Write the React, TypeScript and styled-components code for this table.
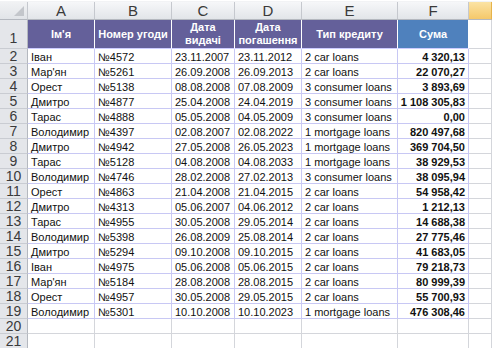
import styled, { createGlobalStyle } from "styled-components";

const GlobalStyle = createGlobalStyle`
    html, body { margin: 0; padding: 0; background: #ffffff; }
    body { width: 492px; height: 348px; overflow: hidden; }
`

const COLS = "28px 67px 77px 63px 67px 96px 71px 23px"

const Sheet = styled.div`
    display: flex;
    flex-direction: column;
    width: 492px;
    height: 348px;
    overflow: hidden;
    background: #ffffff;
    font-family: "Liberation Sans", Arial, sans-serif;
`
const TopStrip = styled.div`
    height: 4px;
    border-top: 1px solid #ffffff;
    background: #c9ccd2;
    border-bottom: 1px solid #f2f3f5;
    box-sizing: border-box;
`
const Row = styled.div<{ $h: number }>`
    display: grid;
    grid-template-columns: ${COLS};
    height: ${p => p.$h}px;
    flex-shrink: 0;
`
const ColHead = styled.div<{ $active?: boolean }>`
    display: flex;
    align-items: center;
    justify-content: center;
    box-sizing: border-box;
    border-right: 1px solid ${p => p.$active ? "#e6b34a" : "#c5c8ce"};
    border-bottom: 1px solid #b4b8bf;
    background: ${p => p.$active
        ? "linear-gradient(#fbe3a4, #f5c86a)"
        : "linear-gradient(#f6f7f9, #e2e5e9)"};
    color: #3a3a3a;
    font-size: 15px;
    line-height: 15px;
`
const Corner = styled(ColHead)`
    position: relative;
    background: linear-gradient(#f1f2f4, #e1e4e8);
    &::after {
        content: "";
        position: absolute;
        right: 3px;
        bottom: 3px;
        width: 0;
        height: 0;
        border-left: 10px solid transparent;
        border-bottom: 10px solid #c3c6cb;
    }
`
const RowHead = styled.div<{ $bottom?: boolean }>`
    display: flex;
    align-items: ${p => p.$bottom ? "flex-end" : "center"};
    justify-content: center;
    box-sizing: border-box;
    background: #e4e6ea;
    border-right: 1px solid #b4b8bf;
    border-bottom: 1px solid #c9ccd2;
    color: #3a3a3a;
    font-size: 14px;
    line-height: 13px;
    padding-bottom: ${p => p.$bottom ? "3px" : "0"};
`
const HeadCell = styled.div<{ $blue?: boolean }>`
    display: flex;
    align-items: center;
    justify-content: center;
    text-align: center;
    box-sizing: border-box;
    background: ${p => p.$blue ? "#4f81bd" : "#64609a"};
    border-right: 1px solid #ffffff;
    border-bottom: 1px solid #ccccff;
    color: #ffffff;
    font-weight: bold;
    font-size: 11px;
    line-height: 13px;
`
const Cell = styled.div<{ $num?: boolean; $grid?: boolean }>`
    display: flex;
    align-items: center;
    justify-content: ${p => p.$num ? "flex-end" : "flex-start"};
    box-sizing: border-box;
    padding: 1px 3px 0 3px;
    border-right: 1px solid ${p => p.$grid ? "#d4d6db" : "#c8c8f4"};
    border-bottom: 1px solid ${p => p.$grid ? "#d4d6db" : "#c8c8f4"};
    font-size: 11px;
    line-height: 12px;
    font-weight: ${p => p.$num ? "bold" : "normal"};
    color: #111111;
    white-space: nowrap;
    overflow: hidden;
`
const EmptyCell = styled.div`
    box-sizing: border-box;
    border-right: 1px solid #d4d6db;
    border-bottom: 1px solid #d4d6db;
`

const data: string[][] = [
    ["Іван", "№4572", "23.11.2007", "23.11.2012", "2 car loans", "4 320,13"],
    ["Мар'ян", "№5261", "26.09.2008", "26.09.2013", "2 car loans", "22 070,27"],
    ["Орест", "№5138", "08.08.2008", "07.08.2009", "3 consumer loans", "3 893,69"],
    ["Дмитро", "№4877", "25.04.2008", "24.04.2019", "3 consumer loans", "1 108 305,83"],
    ["Тарас", "№4888", "05.05.2008", "04.05.2009", "3 consumer loans", "0,00"],
    ["Володимир", "№4397", "02.08.2007", "02.08.2022", "1 mortgage loans", "820 497,68"],
    ["Дмитро", "№4942", "27.05.2008", "26.05.2023", "1 mortgage loans", "369 704,50"],
    ["Тарас", "№5128", "04.08.2008", "04.08.2033", "1 mortgage loans", "38 929,53"],
    ["Володимир", "№4746", "28.02.2008", "27.02.2013", "3 consumer loans", "38 095,94"],
    ["Орест", "№4863", "21.04.2008", "21.04.2015", "2 car loans", "54 958,42"],
    ["Дмитро", "№4313", "05.06.2007", "04.06.2012", "2 car loans", "1 212,13"],
    ["Тарас", "№4955", "30.05.2008", "29.05.2014", "2 car loans", "14 688,38"],
    ["Володимир", "№5398", "26.08.2009", "25.08.2014", "2 car loans", "27 775,46"],
    ["Дмитро", "№5294", "09.10.2008", "09.10.2015", "2 car loans", "41 683,05"],
    ["Іван", "№4975", "05.06.2008", "05.06.2015", "2 car loans", "79 218,73"],
    ["Мар'ян", "№5184", "28.08.2008", "28.08.2015", "2 car loans", "80 999,39"],
    ["Орест", "№4957", "30.05.2008", "29.05.2015", "2 car loans", "55 700,93"],
    ["Володимир", "№5301", "10.10.2008", "10.10.2023", "1 mortgage loans", "476 308,46"],
]

export default function App() {
    return (
        <>
            <GlobalStyle />
            <Sheet>
                <TopStrip />
                {/* Column letters */}
                <Row $h={18}>
                    <Corner />
                    {["A", "B", "C", "D", "E", "F"].map(l => <ColHead key={l}>{l}</ColHead>)}
                    <ColHead $active />
                </Row>
                {/* Table header */}
                <Row $h={29}>
                    <RowHead $bottom>1</RowHead>
                    <HeadCell>Ім'я</HeadCell>
                    <HeadCell>Номер угоди</HeadCell>
                    <HeadCell>Дата<br />видачі</HeadCell>
                    <HeadCell>Дата<br />погашення</HeadCell>
                    <HeadCell>Тип кредиту</HeadCell>
                    <HeadCell $blue>Сума</HeadCell>
                    <EmptyCell />
                </Row>
                {data.map((r, i) => (
                    <Row $h={15} key={i}>
                        <RowHead>{i + 2}</RowHead>
                        <Cell>{r[0]}</Cell>
                        <Cell>{r[1]}</Cell>
                        <Cell>{r[2]}</Cell>
                        <Cell>{r[3]}</Cell>
                        <Cell>{r[4]}</Cell>
                        <Cell $num>{r[5]}</Cell>
                        <EmptyCell />
                    </Row>
                ))}
                {[20, 21].map(n => (
                    <Row $h={15} key={n}>
                        <RowHead>{n}</RowHead>
                        {[0, 1, 2, 3, 4, 5, 6].map(c => <EmptyCell key={c} />)}
                    </Row>
                ))}
            </Sheet>
        </>
    )
}
